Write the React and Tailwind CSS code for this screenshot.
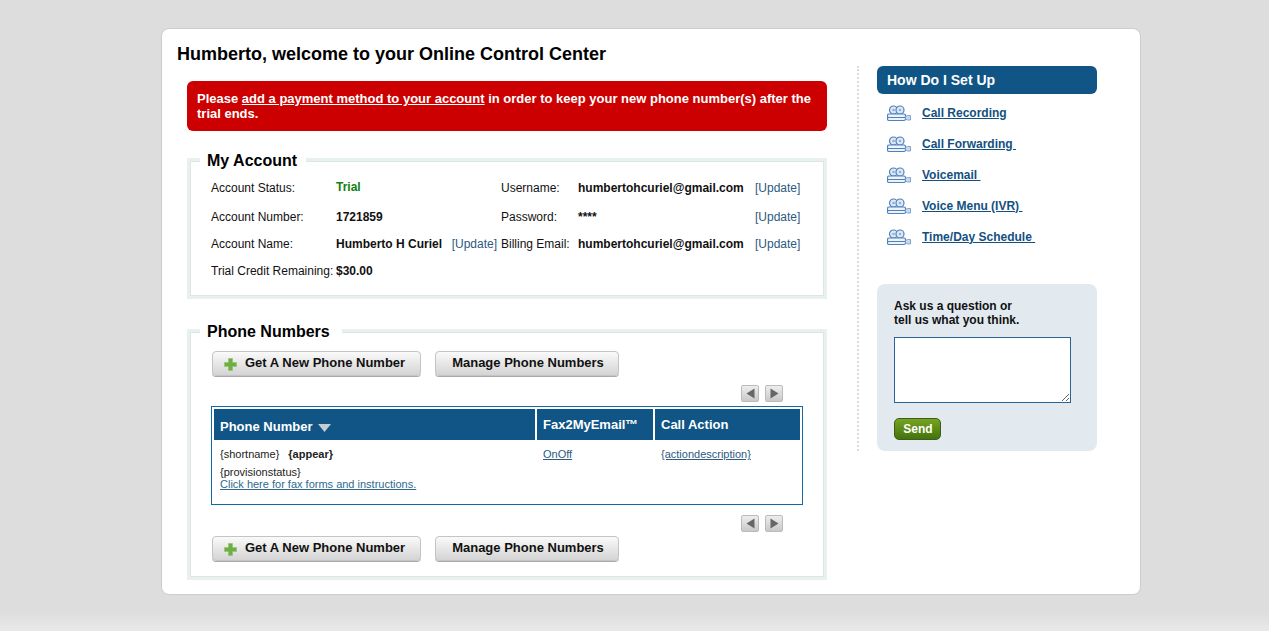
const font = { fontFamily: '"Liberation Sans", Arial, sans-serif' };

function PlusIcon() {
  return (
    <svg width="13" height="13" viewBox="0 0 13 13" className="shrink-0 mt-[4px]">
      <path d="M4.500 0.500h4v4h4v4h-4v4h-4v-4h-4v-4h4z" fill="#6fae45" stroke="#8cc46a" strokeWidth="0.6" />
    </svg>
  );
}

function CameraIcon() {
  return (
    <svg width="24" height="17" viewBox="0 0 24 17" fill="none" className="shrink-0 mt-[1px]">
      <circle cx="6.500" cy="5" r="4" fill="#dfe9f4" stroke="#4f81bd" strokeWidth="1.2" />
      <circle cx="13" cy="5" r="4" fill="#dfe9f4" stroke="#4f81bd" strokeWidth="1.2" />
      <circle cx="6.500" cy="5" r="1.300" fill="#8fb0d6" />
      <circle cx="13" cy="5" r="1.300" fill="#8fb0d6" />
      <rect x="0.500" y="9" width="18" height="6.500" rx="1.500" fill="#eef3f9" stroke="#4f81bd" strokeWidth="1.200" />
      <path d="M1 12.500h17" stroke="#4f81bd" strokeWidth="1" />
      <path d="M18.500 11.500l2-1h3v4.500h-3l-2-1z" fill="#c9d9ec" stroke="#6d94c4" strokeWidth="0.8" />
    </svg>
  );
}

function ActionButton({ plus, className, children }) {
  return (
    <button
      className={`h-[25px] pb-[2px] flex items-center rounded-[4px] border border-[#c4c4c4] bg-gradient-to-b from-[#fafafa] to-[#d4d4d4] text-[13px] font-bold text-[#111] shadow-[0_1px_0_#aaa] ${className}`}
    >
      {plus && <PlusIcon />}
      {children}
    </button>
  );
}

function Arrow({ left }) {
  return (
    <span className="w-[18px] h-[17px] flex items-center justify-center rounded-[2px] border border-[#bbb] bg-gradient-to-b from-[#eee] to-[#c8c8c8]">
      <svg width="9" height="11" viewBox="0 0 9 11">
        <path d={left ? "M8.500 0.500v10L0.500 5.500z" : "M0.500 0.500v10l8-5z"} fill="#666" />
      </svg>
    </span>
  );
}

function Arrows() {
  return (
    <div className="flex justify-end gap-[6px] pr-[41px]">
      <Arrow left />
      <Arrow />
    </div>
  );
}

function Update() {
  return <a className="text-[#2d5a80] text-[12px]">[Update]</a>;
}

function Section({ title, legendClass, className, children }) {
  return (
    <fieldset
      className={`border-[3px] border-[#e8f0f0] shadow-[inset_0_0_0_1px_#dde5e5] w-[640px] ${className}`}
    >
      <legend className={`ml-[10px] pl-[7px] pt-[4px] bg-white text-[16px] leading-[18px] font-bold text-black ${legendClass}`}>
        {title}
      </legend>
      {children}
    </fieldset>
  );
}

function ButtonRow() {
  return (
    <div className="flex gap-[14px] pl-[22px]">
      <ActionButton plus className="w-[209px] pl-[11px] gap-[8px]">
        Get A New Phone Number
      </ActionButton>
      <ActionButton className="w-[184px] pl-[2px] justify-center">Manage Phone Numbers</ActionButton>
    </div>
  );
}

const setupLinks = ["Call Recording", "Call Forwarding\u00a0", "Voicemail\u00a0", "Voice Menu (IVR)\u00a0", "Time/Day Schedule\u00a0"];

export default function App() {
  return (
    <div
      style={font}
      className="h-[631px] overflow-hidden pt-[28px] pl-[161px] bg-[linear-gradient(to_bottom,#dddddd_0,#dddddd_612px,#e9e9e9_631px)]"
    >
      <div className="w-[980px] h-[567px] flex bg-white border border-[#cccccc] rounded-[8px]">
        {/* left column */}
        <div className="w-[695px] shrink-0">
          <h1 className="pl-[15px] pt-[15px] text-[18px] leading-[21px] font-bold text-black">
            Humberto, welcome to your Online Control Center
          </h1>
          <div className="ml-[25px] mt-[16px] w-[640px] h-[50px] rounded-[6px] bg-[#cc0000] px-[10px] pt-[10px] text-[13px] leading-[15px] font-bold text-white">
            Please <a className="underline">add a payment method to your account</a> in order to keep your new phone number(s) after the trial ends.
          </div>

          <Section title="My Account" legendClass="pr-[9px]" className="ml-[25px] mt-[17px] h-[151px]">
            <div className="grid grid-cols-[125px_165px_77px_177px_auto] grid-rows-[29px_29px_26px_27px] pl-[21px] pt-[3px] text-[12px] text-[#111] items-center">
              <span>Account Status:</span>
              <span className="font-bold text-[#118011] -mt-[2px]">Trial</span>
              <span>Username:</span>
              <span className="font-bold">humbertohcuriel@gmail.com</span>
              <Update />

              <span>Account Number:</span>
              <span className="font-bold">1721859</span>
              <span>Password:</span>
              <span className="font-bold">****</span>
              <Update />

              <span>Account Name:</span>
              <span className="flex justify-between pr-[4px]">
                <b>Humberto H Curiel</b>
                <Update />
              </span>
              <span>Billing Email:</span>
              <span className="font-bold">humbertohcuriel@gmail.com</span>
              <Update />

              <span className="whitespace-nowrap">Trial Credit Remaining:</span>
              <span className="font-bold">$30.00</span>
            </div>
          </Section>

          <Section title="Phone Numbers" legendClass="pr-[12px]" className="ml-[25px] mt-[20px] h-[261px]">
            <div className="pt-[10px]">
              <ButtonRow />
              <div className="mt-[9px]">
                <Arrows />
              </div>
              <div className="ml-[21px] mt-[4px] w-[592px] h-[99px] border border-[#0f6aa5] p-[2px]">
                <div className="grid grid-cols-[321px_116px_145px] gap-x-[2px] text-white font-bold h-[31px]">
                  <div className="bg-[#105585] pl-[6px] pt-[4px] flex items-center gap-[6px] text-[13px]">
                    Phone Number
                    <svg width="13" height="8" viewBox="0 0 13 8" className="mt-[2px]">
                      <path d="M0 0h13L6.500 8z" fill="#c5ccd2" />
                    </svg>
                  </div>
                  <div className="bg-[#105585] pl-[6px] pt-[6px] text-[13px]">Fax2MyEmail™</div>
                  <div className="bg-[#105585] pl-[6px] pt-[6px] text-[13px]">Call Action</div>
                </div>
                <div className="grid grid-cols-[321px_116px_145px] gap-x-[2px] text-[11px] leading-[12px] text-[#222]">
                  <div className="pl-[6px] pt-[8px]">
                    <div>
                      {"{shortname}"}
                      <b className="ml-[9px]">{"{appear}"}</b>
                    </div>
                    <div className="mt-[6px]">{"{provisionstatus}"}</div>
                    <a className="underline text-[#2d6a90]">Click here for fax forms and instructions.</a>
                  </div>
                  <div className="pl-[6px] pt-[8px]">
                    <a className="underline text-[#2d5a80]">OnOff</a>
                  </div>
                  <div className="pl-[6px] pt-[8px]">
                    <a className="underline text-[#2d5a80]">{"{actiondescription}"}</a>
                  </div>
                </div>
              </div>
              <div className="mt-[10px]">
                <Arrows />
              </div>
              <div className="mt-[4px]">
                <ButtonRow />
              </div>
            </div>
          </Section>
        </div>

        {/* sidebar */}
        <div className="mt-[37px] h-[385px] border-l-2 border-dotted border-[#dcdcdc] pl-[18px] w-[240px]">
          <div className="w-[220px] h-[28px] rounded-[6px] bg-[#105585] pl-[10px] flex items-center text-[14px] font-bold text-white">
            How Do I Set Up
          </div>
          <ul className="mt-[3px] flex flex-col">
            {setupLinks.map((label) => (
              <li key={label} className="h-[31px] pl-[10px] flex items-center gap-[11px]">
                <CameraIcon />
                <a className="underline text-[12px] font-bold text-[#14507f]">{label}</a>
              </li>
            ))}
          </ul>
          <div className="mt-[32px] w-[220px] h-[167px] rounded-[8px] bg-[#e2eaf0] pl-[17px] pt-[15px]">
            <p className="text-[12px] leading-[14px] font-bold text-[#111]">
              Ask us a question or
              <br />
              tell us what you think.
            </p>
            <textarea className="block mt-[10px] w-[177px] h-[66px] bg-white border border-[#2a6496]" />
            <button className="block mt-[15px] pl-[1px] w-[47px] h-[22px] rounded-[5px] border border-[#3c5c20] bg-gradient-to-b from-[#75a51f] to-[#44720f] text-[12px] font-bold text-white">
              Send
            </button>
          </div>
        </div>
      </div>
    </div>
  );
}
